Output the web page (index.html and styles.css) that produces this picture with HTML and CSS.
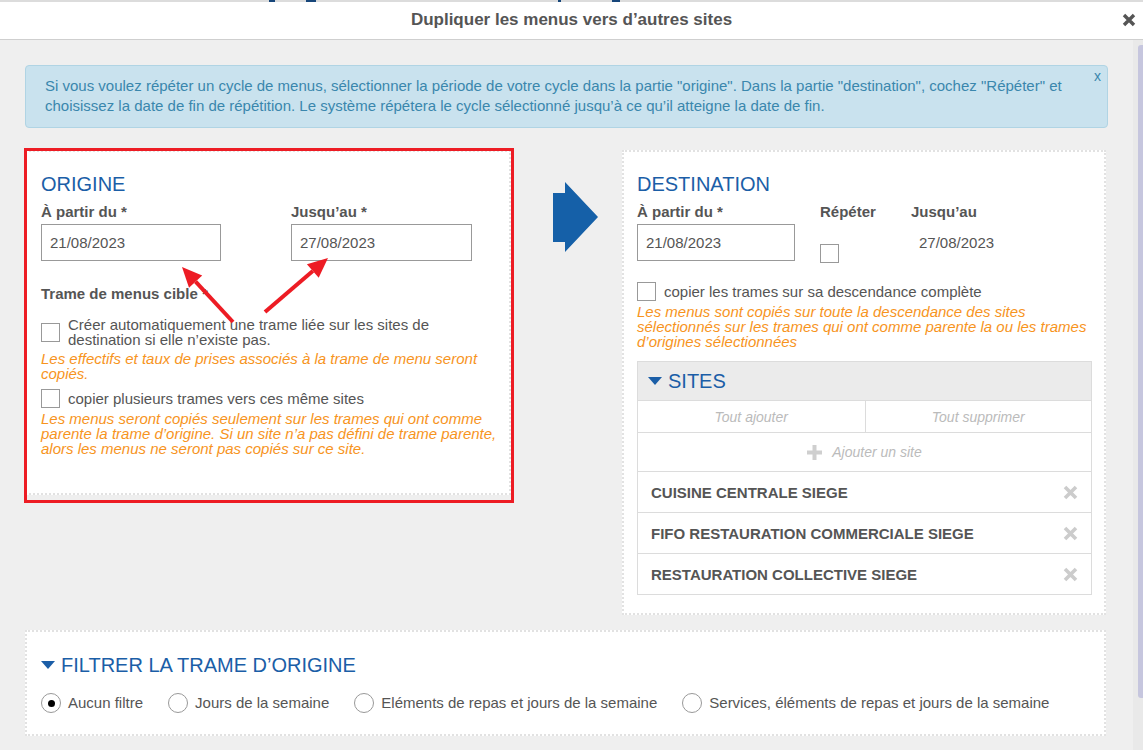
FILE: index.html
```html
<!DOCTYPE html>
<html lang="fr">
<head>
  <meta charset="UTF-8">
  <meta name="viewport" content="width=device-width, initial-scale=1.0">
  <title>Dupliquer les menus vers d’autres sites</title>
  <link rel="stylesheet" href="styles.css">
</head>
<body>
  <div class="page-strip">
    <span class="mark mark-a"></span>
    <span class="mark mark-b"></span>
    <span class="mark mark-c"></span>
    <span class="mark mark-d"></span>
  </div>
  <div class="modal">
    <div class="modal-header">
      <h1>Dupliquer les menus vers d’autres sites</h1>
      <button class="close" type="button" aria-label="Fermer">
        <svg width="14" height="14" viewBox="0 0 14 14"><path d="M2 2 L12 12 M12 2 L2 12" stroke="#555" stroke-width="3.4"/></svg>
      </button>
    </div>

    <div class="modal-body">
      <div class="body-content">
        <div class="alert">
          Si vous voulez répéter un cycle de menus, sélectionner la période de votre cycle dans la partie "origine". Dans la partie "destination", cochez "Répéter" et choisissez la date de fin de répétition. Le système répétera le cycle sélectionné jusqu’à ce qu’il atteigne la date de fin.
          <span class="alert-close">x</span>
        </div>

        <div class="columns">
          <div class="origin-wrap">
            <section class="panel origin">
              <h2>ORIGINE</h2>
              <div class="dates origin-dates">
                <label class="field-label">À partir du *</label>
                <label class="field-label">Jusqu’au *</label>
                <input class="date-input" type="text" value="21/08/2023">
                <input class="date-input" type="text" value="27/08/2023">
              </div>
              <div class="field-label trame-label">Trame de menus cible *</div>
              <label class="check-row first-check">
                <input type="checkbox">
                <span>Créer automatiquement une trame liée sur les sites de destination si elle n’existe pas.</span>
              </label>
              <p class="hint">Les effectifs et taux de prises associés à la trame de menu seront copiés.</p>
              <label class="check-row second-check">
                <input type="checkbox">
                <span>copier plusieurs trames vers ces même sites</span>
              </label>
              <p class="hint hint-tight">Les menus seront copiés seulement sur les trames qui ont comme parente la trame d’origine. Si un site n’a pas défini de trame parente, alors les menus ne seront pas copiés sur ce site.</p>
            </section>
            <div class="highlight"></div>
            <svg class="annot" width="340" height="200" viewBox="0 0 340 200">
              <line x1="208" y1="172" x2="170.6" y2="131.7" stroke="#ed1c24" stroke-width="4"/>
              <polygon points="157,117 177.2,125.6 164,137.8" fill="#ed1c24"/>
              <line x1="240" y1="162" x2="287.8" y2="121" stroke="#ed1c24" stroke-width="4"/>
              <polygon points="303,108 293.7,127.8 281.9,114.2" fill="#ed1c24"/>
            </svg>
          </div>

          <div class="arrow-col">
            <svg width="46" height="71" viewBox="0 0 46 71"><polygon points="0,11 12,11 12,0 45,35 12,70 12,60 0,60" fill="#1560a8"/></svg>
          </div>

          <section class="panel destination">
            <h2>DESTINATION</h2>
            <div class="dates dest-dates">
              <label class="field-label">À partir du *</label>
              <label class="field-label">Répéter</label>
              <label class="field-label">Jusqu’au</label>
              <input class="date-input" type="text" value="21/08/2023">
              <div class="repeat-cell"><input type="checkbox"></div>
              <div class="date-text">27/08/2023</div>
            </div>
            <label class="check-row desc-check">
              <input type="checkbox">
              <span>copier les trames sur sa descendance complète</span>
            </label>
            <p class="hint">Les menus sont copiés sur toute la descendance des sites sélectionnés sur les trames qui ont comme parente la ou les trames d’origines sélectionnées</p>

            <div class="sites">
              <div class="sites-head"><span class="caret"></span>SITES</div>
              <div class="sites-tools">
                <span>Tout ajouter</span>
                <span>Tout supprimer</span>
              </div>
              <div class="sites-add">
                <svg width="15" height="15" viewBox="0 0 15 15"><path d="M7.5 0 V15 M0 7.5 H15" stroke="#cfcfcf" stroke-width="4"/></svg>
                <span>Ajouter un site</span>
              </div>
              <div class="site-row">CUISINE CENTRALE SIEGE<svg class="remove" width="15" height="15" viewBox="0 0 15 15"><path d="M2 2 L13 13 M13 2 L2 13" stroke="#cccccc" stroke-width="3.6"/></svg></div>
              <div class="site-row">FIFO RESTAURATION COMMERCIALE SIEGE<svg class="remove" width="15" height="15" viewBox="0 0 15 15"><path d="M2 2 L13 13 M13 2 L2 13" stroke="#cccccc" stroke-width="3.6"/></svg></div>
              <div class="site-row">RESTAURATION COLLECTIVE SIEGE<svg class="remove" width="15" height="15" viewBox="0 0 15 15"><path d="M2 2 L13 13 M13 2 L2 13" stroke="#cccccc" stroke-width="3.6"/></svg></div>
            </div>
          </section>
        </div>

        <section class="panel filter">
          <h2><span class="caret"></span>FILTRER LA TRAME D’ORIGINE</h2>
          <div class="radios">
            <label class="radio"><input type="radio" name="filtre" checked> Aucun filtre</label>
            <label class="radio"><input type="radio" name="filtre"> Jours de la semaine</label>
            <label class="radio"><input type="radio" name="filtre"> Eléments de repas et jours de la semaine</label>
            <label class="radio"><input type="radio" name="filtre"> Services, éléments de repas et jours de la semaine</label>
          </div>
        </section>
      </div>
      <div class="scrollbar"><div class="thumb"></div></div>
    </div>
  </div>
</body>
</html>
```

FILE: styles.css
```css
* { box-sizing: border-box; }
html, body { height: 100%; }
body { margin: 0; background: #efefef; font-family: "Liberation Sans", Arial, sans-serif; font-size: 15px; color: #555; overflow: hidden; }

.page-strip { height: 2px; background: #dcdcdc; display: flex; }
.mark { display: block; height: 2px; background: #17467a; }
.mark-a { margin-left: 269px; width: 6px; }
.mark-b { margin-left: 31px; width: 10px; }
.mark-c { margin-left: 242px; width: 3px; }
.mark-d { margin-left: 51px; width: 8px; }

.modal { height: calc(100% - 2px); display: flex; flex-direction: column; }
.modal-header { height: 38px; background: #fff; border-bottom: 1px solid #cfcfcf; display: flex; align-items: center; justify-content: center; position: relative; flex-shrink: 0; }
.modal-header h1 { margin: 0 0 2px; font-size: 17px; font-weight: bold; color: #555; }
.close { position: absolute; right: 6px; top: 11px; border: 0; background: none; padding: 0; width: 16px; height: 16px; }

.modal-body { flex: 1; min-height: 0; display: flex; }
.body-content { flex: 1; min-width: 0; overflow: hidden; padding: 25px 25px 70px; }
.scrollbar { width: 10px; flex-shrink: 0; background: #e9e9e9; padding: 5px 0 52px 5px; }
.thumb { height: 100%; background: #c6c6de; border-radius: 3px 0 0 3px; }

.alert { position: relative; background: #c9e2ee; border: 1px solid #b0d4e4; border-radius: 4px; color: #3a87ad; font-size: 15px; line-height: 20px; padding: 10px 30px 11px 19px; }
.alert-close { position: absolute; right: 6px; top: 0; font-size: 14px; color: #3a87ad; }

.columns { display: grid; grid-template-columns: 486px 111px 484px; margin-top: 22px; align-items: start; }

.panel { background: #fff; border: 2px dotted #e2e2e2; }
.panel h2 { margin: 0; font-size: 20px; line-height: 22px; font-weight: normal; color: #1b5ea7; }

.origin-wrap { position: relative; }
.origin { padding: 21px 10px 37px 14px; }
.highlight { position: absolute; left: -1px; top: -2px; width: 490px; height: 355px; border: 3px solid #ed1c24; pointer-events: none; }
.annot { position: absolute; left: 0; top: 0; pointer-events: none; }

.field-label { display: block; font-weight: bold; font-size: 15px; line-height: 17px; color: #555; }
.dates { display: grid; margin-top: 8px; row-gap: 4px; }
.origin-dates { grid-template-columns: 180px 181px; column-gap: 70px; }
.dest-dates { grid-template-columns: 158px 66px auto; column-gap: 25px; }
.date-input { height: 37px; width: 100%; border: 1px solid #999; padding: 0 8px; font: 15px "Liberation Sans", Arial, sans-serif; color: #555; background: #fff; }
.repeat-cell { padding-top: 20px; }
.date-text { padding: 10px 8px; line-height: 17px; }

.trame-label { margin-top: 24px; }

.check-row { display: flex; align-items: center; gap: 8px; line-height: 15px; }
.check-row input { appearance: none; -webkit-appearance: none; margin: 0; width: 19px; height: 19px; border: 1px solid #999; background: #fff; flex-shrink: 0; }
.repeat-cell input { appearance: none; -webkit-appearance: none; margin: 0; width: 19px; height: 19px; border: 1px solid #999; background: #fff; display: block; }
.first-check { margin-top: 15px; }
.second-check { margin-top: 8px; }
.desc-check { margin-top: 19px; }

.hint { margin: 4px 0 0; color: #f7941d; font-style: italic; line-height: 15px; }
.hint-tight { margin-top: 3px; }
.destination .hint { margin-top: 3px; }

.arrow-col { padding: 32px 0 0 42px; }

.destination { padding: 21px 12px 18px 13px; }

.sites { margin-top: 12px; border: 1px solid #dcdcdc; }
.sites-head { height: 39px; background: #ebebeb; display: flex; align-items: center; padding-left: 10px; font-size: 20px; color: #1b5ea7; border-bottom: 1px solid #dcdcdc; }
.caret { display: inline-block; width: 0; height: 0; border-left: 7px solid transparent; border-right: 7px solid transparent; border-top: 8px solid #1b5ea7; margin-right: 6px; }
.sites-tools { display: grid; grid-template-columns: 1fr 1fr; height: 32px; border-bottom: 1px solid #dcdcdc; }
.sites-tools span { display: flex; align-items: center; justify-content: center; font-style: italic; font-size: 14px; color: #bbb; }
.sites-tools span + span { border-left: 1px solid #dcdcdc; }
.sites-add { height: 39px; display: flex; align-items: center; justify-content: center; gap: 10px; font-style: italic; font-size: 14px; color: #bbb; border-bottom: 1px solid #dcdcdc; }
.site-row { height: 41px; display: flex; align-items: center; justify-content: space-between; padding: 0 13px 0 13px; font-weight: bold; font-size: 15px; color: #555; border-bottom: 1px solid #dcdcdc; }
.site-row:last-child { border-bottom: 0; height: 40px; }

.filter { margin-top: 15px; width: 1081px; padding: 22px 14px 21px 14px; }
.filter h2 { display: flex; align-items: center; }
.radios { display: flex; margin-top: 17px; gap: 25px; }
.radio { display: flex; align-items: center; gap: 7px; line-height: 20px; }
.radio input { appearance: none; -webkit-appearance: none; margin: 0; width: 20px; height: 20px; border: 1px solid #999; border-radius: 50%; background: #fff; display: grid; place-content: center; }
.radio input:checked::after { content: ""; width: 7px; height: 7px; border-radius: 50%; background: #000; }
```
